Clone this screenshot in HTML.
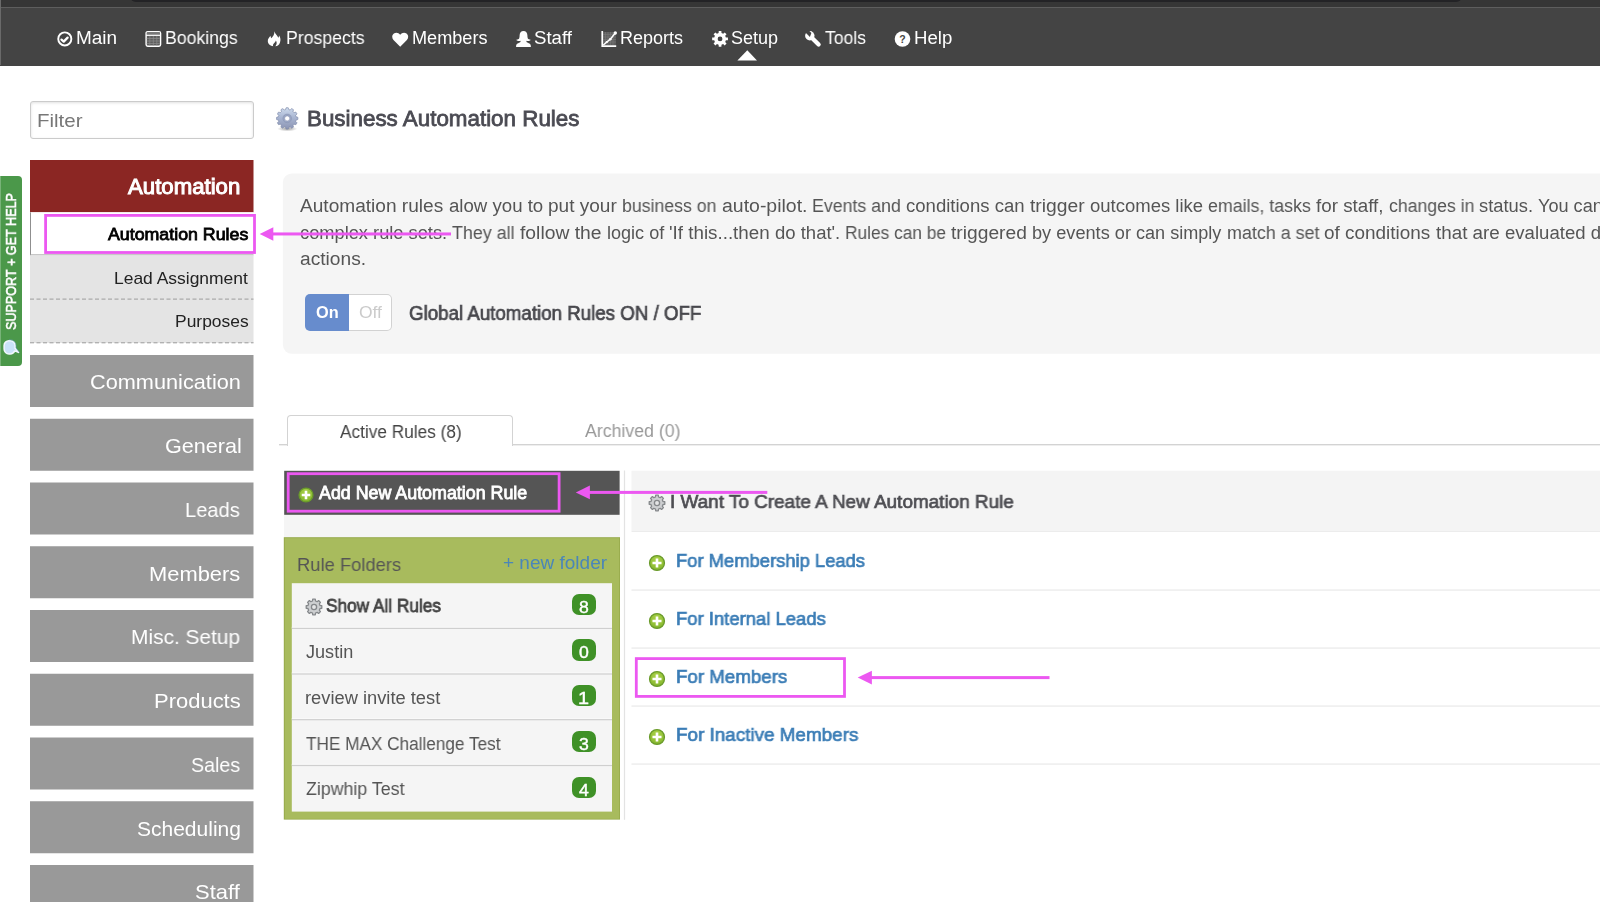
<!DOCTYPE html>
<html lang="en">
<head>
<meta charset="utf-8">
<title>Business Automation Rules</title>
<style>
html,body{margin:0;padding:0;}
body{width:1600px;height:902px;overflow:hidden;background:#fff;position:relative;font-family:'Liberation Sans',sans-serif;}
.a{position:absolute;}
.t{position:absolute;white-space:pre;transform-origin:0 50%;display:block;will-change:transform;}
.badge{position:absolute;left:571.6px;width:24.9px;height:21.4px;border-radius:7px;background:#3f9127;}
</style>
</head>
<body>
<!-- top nav -->
<div class="a" style="left:0;top:0;width:1600px;height:65.5px;background:#444444;"></div>
<div class="a" style="left:0;top:0;width:1600px;height:7px;background:#363636;"></div>
<div class="a" style="left:130px;top:-10px;width:1332px;height:12px;background:#232326;border-radius:8px;"></div>
<div class="a" style="left:0;top:7px;width:1600px;height:1px;background:#5e5e5e;"></div>
<div class="a" style="left:0;top:0;width:1px;height:65px;background:#6a6a6a;"></div>
<svg class="a" style="left:56px;top:30px" width="18" height="18" viewBox="0 0 18 18"><circle cx="8.8" cy="8.9" r="6.55" fill="none" stroke="#fff" stroke-width="1.9"/><path d="M5.500 9.600l2.200 2 3.900-4" fill="none" stroke="#fff" stroke-width="2.3" stroke-linecap="round" stroke-linejoin="round"/></svg>
<svg class="a" style="left:144px;top:30px" width="19" height="18" viewBox="0 0 19 18"><rect x="2.100" y="1.600" width="14.500" height="14.600" rx="1.600" fill="#5e5e5e" stroke="#fff" stroke-width="1.400"/><rect x="2.800" y="2.300" width="13.100" height="2.300" fill="#777"/><rect x="2.100" y="4.700" width="14.500" height="1.200" fill="#fff"/><g stroke="#8c8c8c" stroke-width="0.700"><path d="M2.800 8.500h13.100M2.800 11h13.100M2.800 13.500h13.100M5.800 6v9.500M9.300 6v9.500M12.800 6v9.500"/></g></svg>
<svg class="a" style="left:267px;top:31px" width="14" height="16" viewBox="0 0 14 16"><path d="M7.300 0.300C8 2.800 10.300 4.300 11.300 6.700C12 6 12.100 5 11.900 4.200C13.700 6.300 13.900 9.300 12.900 11.700C12.100 13.700 10.600 15.200 8.300 15.300C9.800 13.800 10.200 11.600 8.900 9.600C8.500 11.100 7.500 11.800 6.600 12.800C5.800 13.700 5.800 14.600 6.300 15.300C3.400 15.100 1 13.200 0.800 10.300C0.600 7.800 2.400 6.300 3.400 4.800C3.800 5.800 3.800 6.700 4.300 7.300C6.100 5.300 7.700 3.300 7.300 0.300Z" fill="#fff"/></svg>
<svg class="a" style="left:392px;top:32px" width="17" height="16" viewBox="0 0 17 16"><path d="M8.200 14.700L1.500 8C-0.400 6 -0.100 2.900 1.900 1.500C3.900 0.100 6.700 0.600 8.200 2.800C9.700 0.600 12.500 0.100 14.500 1.500C16.500 2.900 16.800 6 14.900 8Z" fill="#fff"/></svg>
<svg class="a" style="left:515px;top:30px" width="17" height="18" viewBox="0 0 17 18"><path d="M8.500 0.900C11 0.900 12.400 2.900 12.400 5.400C12.400 6.900 12.600 8.300 13.300 9.100C14 9.800 15.200 9.300 15.600 9.900C14.800 10.900 13 11.300 11.400 10.800C11.300 11.500 11.500 12.200 12.300 12.600C14.300 13.500 15.900 13.900 15.900 16.900L1.100 16.900C1.100 13.900 2.700 13.500 4.700 12.600C5.500 12.200 5.700 11.500 5.600 10.800C4 11.300 2.200 10.900 1.400 9.900C1.800 9.300 3 9.800 3.700 9.100C4.400 8.300 4.600 6.900 4.600 5.400C4.600 2.900 6 0.900 8.500 0.900Z" fill="#fff"/></svg>
<svg class="a" style="left:600px;top:30px" width="18" height="18" viewBox="0 0 18 18"><rect x="2.900" y="2" width="13" height="13.300" fill="#5d5d5d"/><g stroke="#787878" stroke-width="0.600"><path d="M3 4.500h13M3 7h13M3 9.500h13M3 12h13M5.500 2v13M8 2v13M10.500 2v13M13 2v13"/></g><path d="M1.400 0.900h1.700v14.300h13.100v1.700H1.400z" fill="#fff"/><path d="M3.300 15l7-5.800 5-6.200" fill="none" stroke="#fff" stroke-width="1.500" stroke-linejoin="round"/><circle cx="15.300" cy="3" r="1.700" fill="#fff"/><circle cx="10.300" cy="9.200" r="1.300" fill="#fff"/><circle cx="6.800" cy="12.100" r="1.100" fill="#fff"/></svg>
<svg class="a" style="left:711px;top:30px" width="18" height="18" viewBox="0 0 18 18"><path d="M7.60 3.08 L7.74 1.01 L10.36 1.01 L10.50 3.08 L12.14 3.76 L13.70 2.39 L15.56 4.25 L14.19 5.81 L14.87 7.45 L16.94 7.59 L16.94 10.21 L14.87 10.35 L14.19 11.99 L15.56 13.55 L13.70 15.41 L12.14 14.04 L10.50 14.72 L10.36 16.79 L7.74 16.79 L7.60 14.72 L5.96 14.04 L4.40 15.41 L2.54 13.55 L3.91 11.99 L3.23 10.35 L1.16 10.21 L1.16 7.59 L3.23 7.45 L3.91 5.81 L2.54 4.25 L4.40 2.39 L5.96 3.76Z M11.45 8.90 A2.4 2.4 0 1 0 6.65 8.90 A2.4 2.4 0 1 0 11.45 8.90Z" fill="#fff" fill-rule="evenodd"/></svg>
<svg class="a" style="left:804px;top:30px" width="18" height="18" viewBox="0 0 18 18"><circle cx="5.800" cy="5.700" r="4.700" fill="#fff"/><path d="M7 7L14.600 14.500" stroke="#fff" stroke-width="4.300" stroke-linecap="round" fill="none"/><path d="M5.900 6.900L-1 0L0 -1L2.500 -2L7.400 3.100Z" fill="#444"/></svg>
<svg class="a" style="left:893px;top:30px" width="19" height="18" viewBox="0 0 19 18"><circle cx="9.500" cy="9" r="7.800" fill="#fff"/><text x="9.500" y="12.800" text-anchor="middle" font-family="Liberation Sans, sans-serif" font-weight="700" font-size="10.5" fill="#444">?</text></svg>
<svg class="a" style="left:736px;top:49px" width="23" height="13" viewBox="0 0 23 13"><path d="M11.300 1.300L21 11.400H1.400Z" fill="#fff"/></svg>

<!-- support tab -->
<div class="a" style="left:0;top:176px;width:22px;height:190px;background:#4b984a;border-radius:0 4px 4px 0;"></div>
<div class="a" style="left:0;top:176px;width:1px;height:190px;background:#78b378;"></div>
<span class="a" style="left:3.400px;top:330px;white-space:pre;font-size:15px;line-height:15px;color:#fff;-webkit-text-stroke:0.6px #fff;transform-origin:0 0;transform:rotate(-90deg) scaleX(0.8400);will-change:transform;text-shadow:0 0 2px rgba(0,0,0,0.25);">SUPPORT + GET HELP</span>
<svg class="a" style="left:2px;top:338px" width="19" height="21" viewBox="0 0 19 21"><path d="M7 2.700h1.200a4.900 4.900 0 0 1 4.900 4.900v2.600l3.400 4.200-3.800-1.500a4.900 4.900 0 0 1-4.500 3h-1.200a4.900 4.900 0 0 1-4.900-4.900v-3.400a4.900 4.900 0 0 1 4.900-4.900z" fill="#c9e2f9" stroke="#f1f7fe" stroke-width="1.500" stroke-linejoin="round"/><path d="M7 1.800h1.200a5.800 5.800 0 0 1 5.800 5.800v2.300l3.600 4.700" fill="none" stroke="#6fa0d8" stroke-width="0.600" opacity="0.800"/></svg>

<!-- filter -->
<div class="a" style="left:30px;top:101px;width:224px;height:38px;box-sizing:border-box;border:1px solid #cbcbcb;border-radius:3px;background:#fff;box-shadow:inset 0 1px 3px rgba(0,0,0,0.12);"></div>

<!-- sidebar -->
<svg class="a" style="left:0;top:0" width="260" height="902" viewBox="0 0 260 902">
<rect x="30" y="160" width="223.500" height="52.300" fill="#8b2623"/>
<rect x="30" y="212.300" width="223.500" height="43" fill="#fff"/>
<rect x="30" y="212.300" width="1" height="43" fill="#8f8f8f"/>
<rect x="30" y="254.400" width="223.500" height="1" fill="#a2a2a2"/>
<rect x="30" y="255.400" width="223.500" height="87.600" fill="#e4e4e4"/>
<path d="M30 299.100H253.500M30 342.800H253.500" stroke="#9c9c9c" stroke-width="1" stroke-dasharray="4 2.500" fill="none"/>
<rect x="30" y="355.00" width="223.500" height="52" fill="#999"/>
<rect x="30" y="418.75" width="223.500" height="52" fill="#999"/>
<rect x="30" y="482.50" width="223.500" height="52" fill="#999"/>
<rect x="30" y="546.25" width="223.500" height="52" fill="#999"/>
<rect x="30" y="610.00" width="223.500" height="52" fill="#999"/>
<rect x="30" y="673.75" width="223.500" height="52" fill="#999"/>
<rect x="30" y="737.50" width="223.500" height="52" fill="#999"/>
<rect x="30" y="801.25" width="223.500" height="52" fill="#999"/>
<rect x="30" y="865.00" width="223.500" height="52" fill="#999"/>
</svg>

<!-- info box -->
<svg class="a" style="left:0;top:0" width="1600" height="400" viewBox="0 0 1600 400"><rect x="282.900" y="173.400" width="1340" height="180.400" rx="9" fill="#f5f5f5"/></svg>
<!-- toggle -->
<div class="a" style="left:348px;top:294px;width:44.200px;height:37px;box-sizing:border-box;border:1px solid #d2d2d2;border-left:none;border-radius:0 5px 5px 0;background:#fff;"></div>
<div class="a" style="left:305px;top:294px;width:43.700px;height:37px;border-radius:5px 0 0 5px;background:#678ccd;"></div>

<!-- tabs -->
<div class="a" style="left:279px;top:444px;width:1330px;height:1px;background:#d3d3d3;"></div><div class="a" style="left:279px;top:445px;width:1330px;height:1px;background:#eeeeee;"></div>
<div class="a" style="left:287px;top:415px;width:226px;height:31px;box-sizing:border-box;border:1px solid #d3d3d3;border-bottom:none;border-radius:4px 4px 0 0;background:#fff;"></div>

<!-- left panel + right panel -->
<svg class="a" style="left:0;top:0" width="1600" height="902" viewBox="0 0 1600 902">
<rect x="284" y="470.8" width="336.00" height="67.20" fill="#f5f5f5"/>
<rect x="284.2" y="470.8" width="335.40" height="44.00" fill="#555555"/>
<rect x="283.8" y="537.2" width="336.20" height="282.40" fill="#97ab4c"/>
<rect x="284.8" y="538.2" width="334.40" height="280.60" fill="#a8bb5d"/>
<rect x="291.8" y="583.2" width="320.20" height="228.40" fill="#f5f5f5"/>
<rect x="291.8" y="626.8" width="320.20" height="1.00" fill="#fafafa"/>
<rect x="291.8" y="627.8" width="320.20" height="1.20" fill="#cfcfcf"/>
<rect x="291.8" y="672.4" width="320.20" height="1.00" fill="#fafafa"/>
<rect x="291.8" y="673.4" width="320.20" height="1.20" fill="#cfcfcf"/>
<rect x="291.8" y="718.1" width="320.20" height="1.00" fill="#fafafa"/>
<rect x="291.8" y="719.1" width="320.20" height="1.20" fill="#cfcfcf"/>
<rect x="291.8" y="763.9" width="320.20" height="1.00" fill="#fafafa"/>
<rect x="291.8" y="764.9" width="320.20" height="1.20" fill="#cfcfcf"/>
<rect x="623.9" y="470.5" width="1.20" height="349.30" fill="#e3e3e3"/>
<rect x="631.5" y="470.7" width="968.50" height="60.30" fill="#f4f4f4"/>
<rect x="631.5" y="531" width="968.50" height="1.00" fill="#ececec"/>
<rect x="631.5" y="589.2" width="968.50" height="1.80" fill="#f0f0f0"/>
<rect x="631.5" y="647.2" width="968.50" height="1.80" fill="#f0f0f0"/>
<rect x="631.5" y="705.2" width="968.50" height="1.80" fill="#f0f0f0"/>
<rect x="631.5" y="763.2" width="968.50" height="1.80" fill="#f0f0f0"/>
</svg>
<div class="badge" style="top:593.7px"></div>
<div class="badge" style="top:639.4px"></div>
<div class="badge" style="top:685.1px"></div>
<div class="badge" style="top:730.8px"></div>
<div class="badge" style="top:776.5px"></div>

<svg class="a" style="left:274px;top:105px" width="27" height="28" viewBox="0 0 27 28"><defs><linearGradient id="gg" x1="0" y1="0" x2="0" y2="1"><stop offset="0" stop-color="#cfdcee"/><stop offset="0.45" stop-color="#a9b6d2"/><stop offset="1" stop-color="#8c95b4"/></linearGradient><radialGradient id="gs" cx="0.5" cy="0.5" r="0.5"><stop offset="0" stop-color="#000" stop-opacity="0.38"/><stop offset="1" stop-color="#000" stop-opacity="0"/></radialGradient></defs><ellipse cx="13.300" cy="23.800" rx="10" ry="2.600" fill="url(#gs)"/><path d="M13.20 2.70 L13.40 2.70 L13.60 2.71 L13.80 2.72 L14.00 2.73 L14.20 2.75 L14.37 3.04 L14.51 3.46 L14.63 3.88 L14.75 4.29 L14.86 4.65 L15.02 4.69 L15.18 4.72 L15.34 4.76 L15.50 4.80 L15.66 4.85 L15.82 4.90 L15.98 4.95 L16.14 5.00 L16.42 4.73 L16.72 4.44 L17.04 4.14 L17.37 3.84 L17.66 3.67 L17.84 3.76 L18.02 3.85 L18.20 3.94 L18.38 4.04 L18.55 4.13 L18.72 4.24 L18.89 4.34 L19.06 4.45 L19.23 4.56 L19.39 4.67 L19.39 5.01 L19.30 5.45 L19.20 5.88 L19.10 6.28 L19.01 6.65 L19.13 6.76 L19.25 6.88 L19.37 6.99 L19.49 7.11 L19.61 7.23 L19.72 7.35 L19.84 7.47 L19.95 7.59 L20.32 7.50 L20.72 7.40 L21.15 7.30 L21.59 7.21 L21.93 7.21 L22.04 7.37 L22.15 7.54 L22.26 7.71 L22.36 7.88 L22.47 8.05 L22.56 8.22 L22.66 8.40 L22.75 8.58 L22.84 8.76 L22.93 8.94 L22.76 9.23 L22.46 9.56 L22.16 9.88 L21.87 10.18 L21.60 10.46 L21.65 10.62 L21.70 10.78 L21.75 10.94 L21.80 11.10 L21.84 11.26 L21.88 11.42 L21.91 11.58 L21.95 11.74 L22.31 11.85 L22.72 11.97 L23.14 12.09 L23.56 12.23 L23.85 12.40 L23.87 12.60 L23.88 12.80 L23.89 13.00 L23.90 13.20 L23.90 13.40 L23.90 13.60 L23.89 13.80 L23.88 14.00 L23.87 14.20 L23.85 14.40 L23.56 14.57 L23.14 14.71 L22.72 14.83 L22.31 14.95 L21.95 15.06 L21.91 15.22 L21.88 15.38 L21.84 15.54 L21.80 15.70 L21.75 15.86 L21.70 16.02 L21.65 16.18 L21.60 16.34 L21.87 16.62 L22.16 16.92 L22.46 17.24 L22.76 17.57 L22.93 17.86 L22.84 18.04 L22.75 18.22 L22.66 18.40 L22.56 18.58 L22.47 18.75 L22.36 18.92 L22.26 19.09 L22.15 19.26 L22.04 19.43 L21.93 19.59 L21.59 19.59 L21.15 19.50 L20.72 19.40 L20.32 19.30 L19.95 19.21 L19.84 19.33 L19.72 19.45 L19.61 19.57 L19.49 19.69 L19.37 19.81 L19.25 19.92 L19.13 20.04 L19.01 20.15 L19.10 20.52 L19.20 20.92 L19.30 21.35 L19.39 21.79 L19.39 22.13 L19.23 22.24 L19.06 22.35 L18.89 22.46 L18.72 22.56 L18.55 22.67 L18.38 22.76 L18.20 22.86 L18.02 22.95 L17.84 23.04 L17.66 23.13 L17.37 22.96 L17.04 22.66 L16.72 22.36 L16.42 22.07 L16.14 21.80 L15.98 21.85 L15.82 21.90 L15.66 21.95 L15.50 22.00 L15.34 22.04 L15.18 22.08 L15.02 22.11 L14.86 22.15 L14.75 22.51 L14.63 22.92 L14.51 23.34 L14.37 23.76 L14.20 24.05 L14.00 24.07 L13.80 24.08 L13.60 24.09 L13.40 24.10 L13.20 24.10 L13.00 24.10 L12.80 24.09 L12.60 24.08 L12.40 24.07 L12.20 24.05 L12.03 23.76 L11.89 23.34 L11.77 22.92 L11.65 22.51 L11.54 22.15 L11.38 22.11 L11.22 22.08 L11.06 22.04 L10.90 22.00 L10.74 21.95 L10.58 21.90 L10.42 21.85 L10.26 21.80 L9.98 22.07 L9.68 22.36 L9.36 22.66 L9.03 22.96 L8.74 23.13 L8.56 23.04 L8.38 22.95 L8.20 22.86 L8.02 22.76 L7.85 22.67 L7.68 22.56 L7.51 22.46 L7.34 22.35 L7.17 22.24 L7.01 22.13 L7.01 21.79 L7.10 21.35 L7.20 20.92 L7.30 20.52 L7.39 20.15 L7.27 20.04 L7.15 19.92 L7.03 19.81 L6.91 19.69 L6.79 19.57 L6.68 19.45 L6.56 19.33 L6.45 19.21 L6.08 19.30 L5.68 19.40 L5.25 19.50 L4.81 19.59 L4.47 19.59 L4.36 19.43 L4.25 19.26 L4.14 19.09 L4.04 18.92 L3.93 18.75 L3.84 18.58 L3.74 18.40 L3.65 18.22 L3.56 18.04 L3.47 17.86 L3.64 17.57 L3.94 17.24 L4.24 16.92 L4.53 16.62 L4.80 16.34 L4.75 16.18 L4.70 16.02 L4.65 15.86 L4.60 15.70 L4.56 15.54 L4.52 15.38 L4.49 15.22 L4.45 15.06 L4.09 14.95 L3.68 14.83 L3.26 14.71 L2.84 14.57 L2.55 14.40 L2.53 14.20 L2.52 14.00 L2.51 13.80 L2.50 13.60 L2.50 13.40 L2.50 13.20 L2.51 13.00 L2.52 12.80 L2.53 12.60 L2.55 12.40 L2.84 12.23 L3.26 12.09 L3.68 11.97 L4.09 11.85 L4.45 11.74 L4.49 11.58 L4.52 11.42 L4.56 11.26 L4.60 11.10 L4.65 10.94 L4.70 10.78 L4.75 10.62 L4.80 10.46 L4.53 10.18 L4.24 9.88 L3.94 9.56 L3.64 9.23 L3.47 8.94 L3.56 8.76 L3.65 8.58 L3.74 8.40 L3.84 8.22 L3.93 8.05 L4.04 7.88 L4.14 7.71 L4.25 7.54 L4.36 7.37 L4.47 7.21 L4.81 7.21 L5.25 7.30 L5.68 7.40 L6.08 7.50 L6.45 7.59 L6.56 7.47 L6.68 7.35 L6.79 7.23 L6.91 7.11 L7.03 6.99 L7.15 6.88 L7.27 6.76 L7.39 6.65 L7.30 6.28 L7.20 5.88 L7.10 5.45 L7.01 5.01 L7.01 4.67 L7.17 4.56 L7.34 4.45 L7.51 4.34 L7.68 4.24 L7.85 4.13 L8.02 4.04 L8.20 3.94 L8.38 3.85 L8.56 3.76 L8.74 3.67 L9.03 3.84 L9.36 4.14 L9.68 4.44 L9.98 4.73 L10.26 5.00 L10.42 4.95 L10.58 4.90 L10.74 4.85 L10.90 4.80 L11.06 4.76 L11.22 4.72 L11.38 4.69 L11.54 4.65 L11.65 4.29 L11.77 3.88 L11.89 3.46 L12.03 3.04 L12.20 2.75 L12.40 2.73 L12.60 2.72 L12.80 2.71 L13.00 2.70Z" fill="url(#gg)" stroke="#7f8aa9" stroke-width="0.800" stroke-linejoin="round"/><circle cx="13.200" cy="13.400" r="4.300" fill="#9aa6c4" stroke="#8a95b4" stroke-width="0.600"/><circle cx="13.200" cy="13.400" r="2.500" fill="#fff" stroke="#8791b0" stroke-width="0.500"/></svg>
<svg class="a" style="left:302.5px;top:596.4px" width="22" height="22" viewBox="0 0 22 22"><path d="M9.51 4.98 L9.70 3.21 L12.30 3.21 L12.49 4.98 L14.20 5.69 L15.59 4.57 L17.43 6.41 L16.31 7.80 L17.02 9.51 L18.79 9.70 L18.79 12.30 L17.02 12.49 L16.31 14.20 L17.43 15.59 L15.59 17.43 L14.20 16.31 L12.49 17.02 L12.30 18.79 L9.70 18.79 L9.51 17.02 L7.80 16.31 L6.41 17.43 L4.57 15.59 L5.69 14.20 L4.98 12.49 L3.21 12.30 L3.21 9.70 L4.98 9.51 L5.69 7.80 L4.57 6.41 L6.41 4.57 L7.80 5.69Z M11.01 11.00 A0.01 0.01 0 1 0 10.99 11.00 A0.01 0.01 0 1 0 11.01 11.00Z" fill="#cdcfd1" stroke="#85888b" stroke-width="1.300" stroke-linejoin="round"/><circle cx="11" cy="11" r="2.600" fill="#e4e5e6" stroke="#85888b" stroke-width="1.300"/></svg>
<svg class="a" style="left:645.5px;top:491.9px" width="22" height="22" viewBox="0 0 22 22"><path d="M9.51 4.98 L9.70 3.21 L12.30 3.21 L12.49 4.98 L14.20 5.69 L15.59 4.57 L17.43 6.41 L16.31 7.80 L17.02 9.51 L18.79 9.70 L18.79 12.30 L17.02 12.49 L16.31 14.20 L17.43 15.59 L15.59 17.43 L14.20 16.31 L12.49 17.02 L12.30 18.79 L9.70 18.79 L9.51 17.02 L7.80 16.31 L6.41 17.43 L4.57 15.59 L5.69 14.20 L4.98 12.49 L3.21 12.30 L3.21 9.70 L4.98 9.51 L5.69 7.80 L4.57 6.41 L6.41 4.57 L7.80 5.69Z M11.01 11.00 A0.01 0.01 0 1 0 10.99 11.00 A0.01 0.01 0 1 0 11.01 11.00Z" fill="#cdcfd1" stroke="#85888b" stroke-width="1.300" stroke-linejoin="round"/><circle cx="11" cy="11" r="2.600" fill="#e4e5e6" stroke="#85888b" stroke-width="1.300"/></svg>
<svg class="a" style="left:296.1px;top:485.2px" width="20" height="20" viewBox="0 0 20 20"><defs><radialGradient id="pg0" cx="0.5" cy="0.3" r="0.75"><stop offset="0" stop-color="#abd24a"/><stop offset="0.7" stop-color="#8fbe34"/><stop offset="1" stop-color="#76a82a"/></radialGradient></defs><circle cx="10" cy="10" r="6.95" fill="url(#pg0)" stroke="#6a9b2b" stroke-width="1.300"/><path d="M10 5.74V14.26M5.74 10H14.26" stroke="#fff" stroke-width="2.600" fill="none"/></svg>
<svg class="a" style="left:647.2px;top:553.3px" width="20" height="20" viewBox="0 0 20 20"><defs><radialGradient id="pg1" cx="0.5" cy="0.3" r="0.75"><stop offset="0" stop-color="#abd24a"/><stop offset="0.7" stop-color="#8fbe34"/><stop offset="1" stop-color="#76a82a"/></radialGradient></defs><circle cx="10" cy="10" r="7.45" fill="url(#pg1)" stroke="#6a9b2b" stroke-width="1.300"/><path d="M10 5.46V14.54M5.46 10H14.54" stroke="#fff" stroke-width="2.600" fill="none"/></svg>
<svg class="a" style="left:647.2px;top:611.3px" width="20" height="20" viewBox="0 0 20 20"><defs><radialGradient id="pg2" cx="0.5" cy="0.3" r="0.75"><stop offset="0" stop-color="#abd24a"/><stop offset="0.7" stop-color="#8fbe34"/><stop offset="1" stop-color="#76a82a"/></radialGradient></defs><circle cx="10" cy="10" r="7.45" fill="url(#pg2)" stroke="#6a9b2b" stroke-width="1.300"/><path d="M10 5.46V14.54M5.46 10H14.54" stroke="#fff" stroke-width="2.600" fill="none"/></svg>
<svg class="a" style="left:647.2px;top:669.3px" width="20" height="20" viewBox="0 0 20 20"><defs><radialGradient id="pg3" cx="0.5" cy="0.3" r="0.75"><stop offset="0" stop-color="#abd24a"/><stop offset="0.7" stop-color="#8fbe34"/><stop offset="1" stop-color="#76a82a"/></radialGradient></defs><circle cx="10" cy="10" r="7.45" fill="url(#pg3)" stroke="#6a9b2b" stroke-width="1.300"/><path d="M10 5.46V14.54M5.46 10H14.54" stroke="#fff" stroke-width="2.600" fill="none"/></svg>
<svg class="a" style="left:647.2px;top:727.3px" width="20" height="20" viewBox="0 0 20 20"><defs><radialGradient id="pg4" cx="0.5" cy="0.3" r="0.75"><stop offset="0" stop-color="#abd24a"/><stop offset="0.7" stop-color="#8fbe34"/><stop offset="1" stop-color="#76a82a"/></radialGradient></defs><circle cx="10" cy="10" r="7.45" fill="url(#pg4)" stroke="#6a9b2b" stroke-width="1.300"/><path d="M10 5.46V14.54M5.46 10H14.54" stroke="#fff" stroke-width="2.600" fill="none"/></svg>
<span class="t" style="left:75.8px;top:28.6px;font-size:18px;line-height:18px;font-weight:400;color:#fff;transform:scaleX(1.0541);">Main</span>
<span class="t" style="left:164.6px;top:28.6px;font-size:18px;line-height:18px;font-weight:400;color:#fff;transform:scaleX(0.9819);">Bookings</span>
<span class="t" style="left:285.5px;top:28.6px;font-size:18px;line-height:18px;font-weight:400;color:#fff;transform:scaleX(0.9821);">Prospects</span>
<span class="t" style="left:411.5px;top:28.6px;font-size:18px;line-height:18px;font-weight:400;color:#fff;transform:scaleX(1.0068);">Members</span>
<span class="t" style="left:534.0px;top:28.6px;font-size:18px;line-height:18px;font-weight:400;color:#fff;transform:scaleX(1.0361);">Staff</span>
<span class="t" style="left:620.3px;top:28.6px;font-size:18px;line-height:18px;font-weight:400;color:#fff;transform:scaleX(1.0000);">Reports</span>
<span class="t" style="left:730.6px;top:28.6px;font-size:18px;line-height:18px;font-weight:400;color:#fff;transform:scaleX(0.9933);">Setup</span>
<span class="t" style="left:825.3px;top:28.6px;font-size:18px;line-height:18px;font-weight:400;color:#fff;transform:scaleX(0.9756);">Tools</span>
<span class="t" style="left:913.8px;top:28.6px;font-size:18px;line-height:18px;font-weight:400;color:#fff;transform:scaleX(1.0343);">Help</span>
<span class="t" style="left:307.4px;top:108.0px;font-size:22px;line-height:22px;font-weight:400;color:#4b4b53;transform:scaleX(1.0173);-webkit-text-stroke:0.8px #4b4b53;">Business Automation Rules</span>
<span class="t" style="left:36.7px;top:111.4px;font-size:19px;line-height:19px;font-weight:400;color:#777;transform:scaleX(1.0780);">Filter</span>
<span class="t" style="left:128.0px;top:176.7px;font-size:21.5px;line-height:21.5px;font-weight:400;color:#fff;transform:scaleX(1.0324);-webkit-text-stroke:1px #fff;">Automation</span>
<span class="t" style="left:107.6px;top:226.0px;font-size:17px;line-height:17px;font-weight:400;color:#000;transform:scaleX(1.0455);-webkit-text-stroke:0.8px #000;">Automation Rules</span>
<span class="t" style="left:114.3px;top:269.6px;font-size:17px;line-height:17px;font-weight:400;color:#222;transform:scaleX(1.0264);">Lead Assignment</span>
<span class="t" style="left:174.9px;top:312.9px;font-size:17px;line-height:17px;font-weight:400;color:#222;transform:scaleX(1.0257);">Purposes</span>
<span class="t" style="left:89.7px;top:371.2px;font-size:21px;line-height:21px;font-weight:400;color:#fff;transform:scaleX(1.0340);">Communication</span>
<span class="t" style="left:164.5px;top:435.0px;font-size:21px;line-height:21px;font-weight:400;color:#fff;transform:scaleX(1.0292);">General</span>
<span class="t" style="left:185.0px;top:498.7px;font-size:21px;line-height:21px;font-weight:400;color:#fff;transform:scaleX(0.9582);">Leads</span>
<span class="t" style="left:148.9px;top:562.5px;font-size:21px;line-height:21px;font-weight:400;color:#fff;transform:scaleX(1.0424);">Members</span>
<span class="t" style="left:131.2px;top:626.2px;font-size:21px;line-height:21px;font-weight:400;color:#fff;transform:scaleX(0.9944);">Misc. Setup</span>
<span class="t" style="left:153.8px;top:690.0px;font-size:21px;line-height:21px;font-weight:400;color:#fff;transform:scaleX(1.0462);">Products</span>
<span class="t" style="left:191.0px;top:753.7px;font-size:21px;line-height:21px;font-weight:400;color:#fff;transform:scaleX(0.9353);">Sales</span>
<span class="t" style="left:136.9px;top:817.5px;font-size:21px;line-height:21px;font-weight:400;color:#fff;transform:scaleX(0.9971);">Scheduling</span>
<span class="t" style="left:194.7px;top:881.2px;font-size:21px;line-height:21px;font-weight:400;color:#fff;transform:scaleX(1.0452);">Staff</span>
<span class="t" style="left:300.2px;top:197.0px;font-size:18px;line-height:18px;font-weight:400;color:#555;transform:scaleX(1.0601);">Automation rules </span>
<span class="t" style="left:448.7px;top:197.0px;font-size:18px;line-height:18px;font-weight:400;color:#555;transform:scaleX(1.0347);">alow you to </span>
<span class="t" style="left:548.1px;top:197.0px;font-size:18px;line-height:18px;font-weight:400;color:#555;transform:scaleX(1.0564);">put your </span>
<span class="t" style="left:622.1px;top:197.0px;font-size:18px;line-height:18px;font-weight:400;color:#555;transform:scaleX(0.9834);">business on </span>
<span class="t" style="left:721.5px;top:197.0px;font-size:18px;line-height:18px;font-weight:400;color:#555;transform:scaleX(1.0813);">auto-pilot. </span>
<span class="t" style="left:812.4px;top:197.0px;font-size:18px;line-height:18px;font-weight:400;color:#555;transform:scaleX(0.9867);">Events and </span>
<span class="t" style="left:906.2px;top:197.0px;font-size:18px;line-height:18px;font-weight:400;color:#555;transform:scaleX(1.0302);">conditions can </span>
<span class="t" style="left:1029.9px;top:197.0px;font-size:18px;line-height:18px;font-weight:400;color:#555;transform:scaleX(1.0708);">trigger </span>
<span class="t" style="left:1089.9px;top:197.0px;font-size:18px;line-height:18px;font-weight:400;color:#555;transform:scaleX(1.0273);">outcomes like </span>
<span class="t" style="left:1208.1px;top:197.0px;font-size:18px;line-height:18px;font-weight:400;color:#555;transform:scaleX(0.9887);">emails, tasks </span>
<span class="t" style="left:1315.9px;top:197.0px;font-size:18px;line-height:18px;font-weight:400;color:#555;transform:scaleX(1.0430);">for staff, </span>
<span class="t" style="left:1388.6px;top:197.0px;font-size:18px;line-height:18px;font-weight:400;color:#555;transform:scaleX(0.9818);">changes in </span>
<span class="t" style="left:1479.0px;top:197.0px;font-size:18px;line-height:18px;font-weight:400;color:#555;transform:scaleX(1.0184);">status. </span>
<span class="t" style="left:1538.1px;top:197.0px;font-size:18px;line-height:18px;font-weight:400;color:#555;transform:scaleX(1.0059);">You can build</span>
<span class="t" style="left:300.2px;top:223.6px;font-size:18px;line-height:18px;font-weight:400;color:#555;transform:scaleX(1.0142);">complex rule sets. </span>
<span class="t" style="left:452.4px;top:223.6px;font-size:18px;line-height:18px;font-weight:400;color:#555;transform:scaleX(0.9922);">They all </span>
<span class="t" style="left:519.9px;top:223.6px;font-size:18px;line-height:18px;font-weight:400;color:#555;transform:scaleX(1.0722);">follow the </span>
<span class="t" style="left:606.8px;top:223.6px;font-size:18px;line-height:18px;font-weight:400;color:#555;transform:scaleX(1.0025);">logic of </span>
<span class="t" style="left:669.0px;top:223.6px;font-size:18px;line-height:18px;font-weight:400;color:#555;transform:scaleX(1.0433);">&#x27;If this...then </span>
<span class="t" style="left:774.9px;top:223.6px;font-size:18px;line-height:18px;font-weight:400;color:#555;transform:scaleX(1.0280);">do that&#x27;. </span>
<span class="t" style="left:845.3px;top:223.6px;font-size:18px;line-height:18px;font-weight:400;color:#555;transform:scaleX(0.9620);">Rules can be </span>
<span class="t" style="left:951.2px;top:223.6px;font-size:18px;line-height:18px;font-weight:400;color:#555;transform:scaleX(1.0678);">triggered </span>
<span class="t" style="left:1032.4px;top:223.6px;font-size:18px;line-height:18px;font-weight:400;color:#555;transform:scaleX(1.0091);">by events or </span>
<span class="t" style="left:1136.4px;top:223.6px;font-size:18px;line-height:18px;font-weight:400;color:#555;transform:scaleX(1.0041);">can simply </span>
<span class="t" style="left:1226.8px;top:223.6px;font-size:18px;line-height:18px;font-weight:400;color:#555;transform:scaleX(0.9944);">match a set </span>
<span class="t" style="left:1324.3px;top:223.6px;font-size:18px;line-height:18px;font-weight:400;color:#555;transform:scaleX(1.0521);">of conditions </span>
<span class="t" style="left:1435.9px;top:223.6px;font-size:18px;line-height:18px;font-weight:400;color:#555;transform:scaleX(1.0447);">that are </span>
<span class="t" style="left:1504.9px;top:223.6px;font-size:18px;line-height:18px;font-weight:400;color:#555;transform:scaleX(1.0316);">evaluated daily to trigger</span>
<span class="t" style="left:300.1px;top:250.2px;font-size:18px;line-height:18px;font-weight:400;color:#555;transform:scaleX(1.0644);">actions.</span>
<span class="t" style="left:316.2px;top:304.6px;font-size:16px;line-height:16px;font-weight:700;color:#fff;transform:scaleX(1.0200);">On</span>
<span class="t" style="left:358.5px;top:304.6px;font-size:16px;line-height:16px;font-weight:400;color:#cbcbcb;transform:scaleX(1.0900);">Off</span>
<span class="t" style="left:409.4px;top:303.5px;font-size:19.5px;line-height:19.5px;font-weight:400;color:#47474c;transform:scaleX(0.9601);-webkit-text-stroke:0.7px #47474c;">Global Automation Rules ON / OFF</span>
<span class="t" style="left:340.1px;top:423.0px;font-size:18px;line-height:18px;font-weight:400;color:#444;transform:scaleX(0.9579);">Active Rules (8)</span>
<span class="t" style="left:584.7px;top:421.8px;font-size:18px;line-height:18px;font-weight:400;color:#999;transform:scaleX(0.9844);">Archived (0)</span>
<span class="t" style="left:319.1px;top:485.1px;font-size:17.5px;line-height:17.5px;font-weight:400;color:#fff;transform:scaleX(1.0191);-webkit-text-stroke:0.8px #fff;">Add New Automation Rule</span>
<span class="t" style="left:297.1px;top:555.9px;font-size:18.5px;line-height:18.5px;font-weight:400;color:#555;transform:scaleX(0.9922);">Rule Folders</span>
<span class="t" style="left:502.5px;top:553.3px;font-size:19px;line-height:19px;font-weight:400;color:#4a86b8;transform:scaleX(0.9971);">+ new folder</span>
<span class="t" style="left:326.0px;top:596.8px;font-size:18px;line-height:18px;font-weight:400;color:#444;transform:scaleX(0.9580);-webkit-text-stroke:0.8px #444;">Show All Rules</span>
<span class="t" style="left:305.8px;top:643.3px;font-size:18px;line-height:18px;font-weight:400;color:#555;transform:scaleX(1.0043);">Justin</span>
<span class="t" style="left:304.8px;top:689.0px;font-size:18px;line-height:18px;font-weight:400;color:#555;transform:scaleX(1.0167);">review invite test</span>
<span class="t" style="left:305.8px;top:734.7px;font-size:18px;line-height:18px;font-weight:400;color:#555;transform:scaleX(0.9544);">THE MAX Challenge Test</span>
<span class="t" style="left:305.8px;top:780.4px;font-size:18px;line-height:18px;font-weight:400;color:#555;transform:scaleX(0.9870);">Zipwhip Test</span>
<span class="t" style="left:579.0px;top:598.7px;font-size:16.2px;line-height:16.2px;font-weight:400;color:#fff;transform:scaleX(1.0889);-webkit-text-stroke:0.4px #fff;">8</span>
<span class="t" style="left:579.0px;top:644.4px;font-size:16.2px;line-height:16.2px;font-weight:400;color:#fff;transform:scaleX(1.0889);-webkit-text-stroke:0.4px #fff;">0</span>
<span class="t" style="left:577.8px;top:690.1px;font-size:16.2px;line-height:16.2px;font-weight:400;color:#fff;transform:scaleX(1.2250);-webkit-text-stroke:0.4px #fff;">1</span>
<span class="t" style="left:579.0px;top:735.8px;font-size:16.2px;line-height:16.2px;font-weight:400;color:#fff;transform:scaleX(1.0889);-webkit-text-stroke:0.4px #fff;">3</span>
<span class="t" style="left:579.0px;top:781.5px;font-size:16.2px;line-height:16.2px;font-weight:400;color:#fff;transform:scaleX(1.0889);-webkit-text-stroke:0.4px #fff;">4</span>
<span class="t" style="left:669.7px;top:491.8px;font-size:19px;line-height:19px;font-weight:400;color:#4d4d52;transform:scaleX(0.9956);-webkit-text-stroke:0.7px #4d4d52;">I Want To Create A New Automation Rule</span>
<span class="t" style="left:676.2px;top:551.3px;font-size:19px;line-height:19px;font-weight:400;color:#3b7db6;transform:scaleX(0.9675);-webkit-text-stroke:0.7px #3b7db6;">For Membership Leads</span>
<span class="t" style="left:676.2px;top:609.3px;font-size:19px;line-height:19px;font-weight:400;color:#3b7db6;transform:scaleX(0.9712);-webkit-text-stroke:0.7px #3b7db6;">For Internal Leads</span>
<span class="t" style="left:676.2px;top:667.3px;font-size:19px;line-height:19px;font-weight:400;color:#3b7db6;transform:scaleX(0.9848);-webkit-text-stroke:0.7px #3b7db6;">For Members</span>
<span class="t" style="left:676.2px;top:725.3px;font-size:19px;line-height:19px;font-weight:400;color:#3b7db6;transform:scaleX(0.9923);-webkit-text-stroke:0.7px #3b7db6;">For Inactive Members</span>

<!-- annotations -->
<svg class="a" style="left:0;top:0" width="1600" height="902" viewBox="0 0 1600 902">
<rect x="45.60" y="215.40" width="208.90" height="37.10" fill="none" stroke="#ec58f1" stroke-width="2.8"/>
<rect x="288.20" y="473.70" width="270.90" height="37.50" fill="none" stroke="#ec58f1" stroke-width="2.8"/>
<rect x="636.30" y="658.60" width="208.20" height="37.80" fill="none" stroke="#ec58f1" stroke-width="2.8"/>
<g fill="#ec58f1" stroke="none">
<rect x="270" y="232.450" width="181" height="3"/>
<path d="M259.700 233.950l13.600-6.800v13.600z"/>
<rect x="587" y="490.900" width="180.300" height="3"/>
<path d="M575.800 492.400l14.100-6.800v13.600z"/>
<rect x="869" y="676.100" width="180.500" height="3"/>
<path d="M857.700 677.600l14.200-6.900v13.800z"/>
</g>
</svg>
</body>
</html>
